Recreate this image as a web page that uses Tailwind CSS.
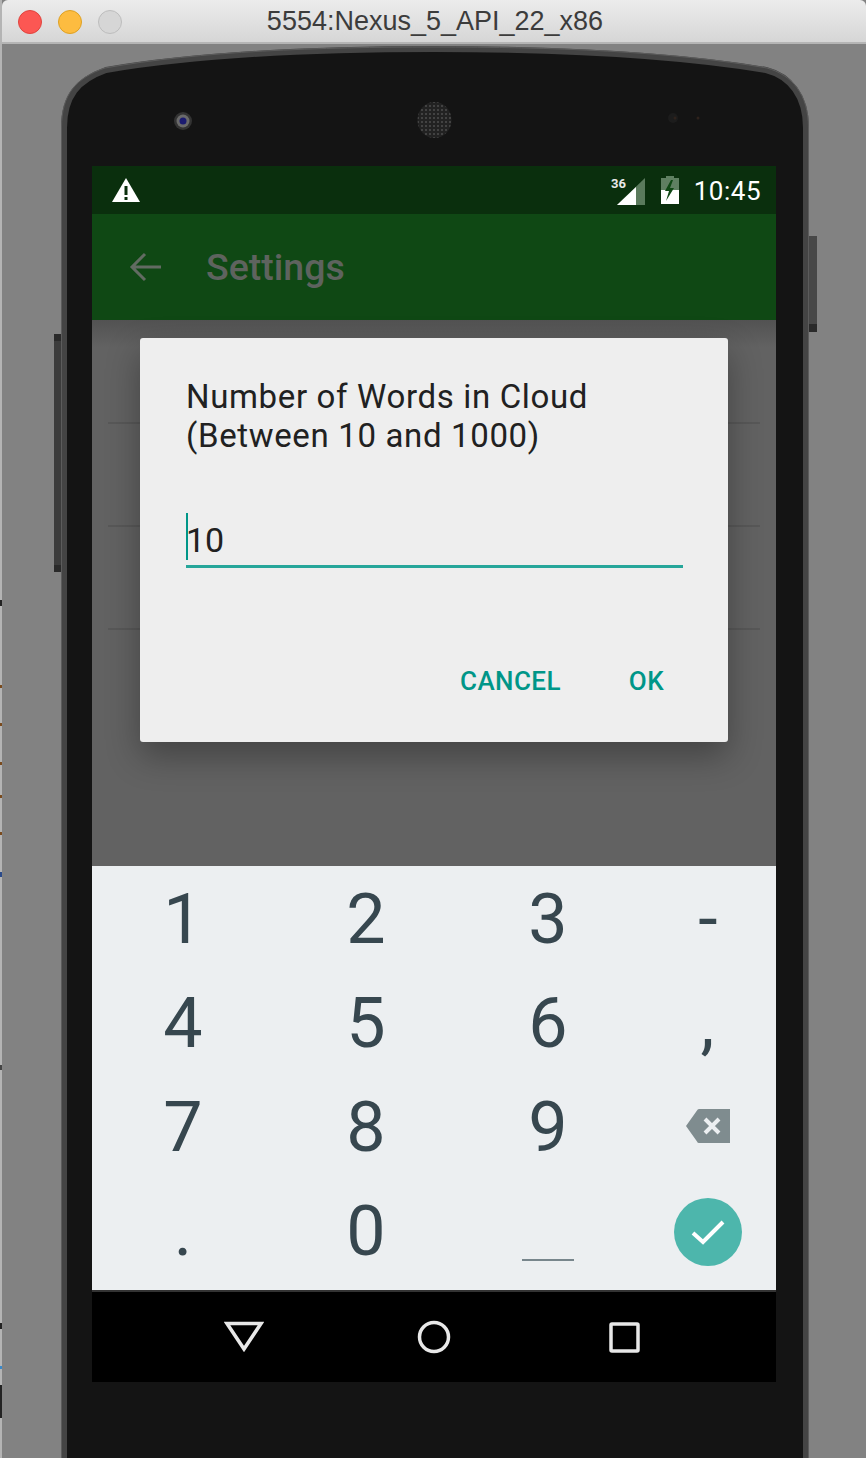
<!DOCTYPE html>
<html>
<head>
<meta charset="utf-8">
<script src="https://cdn.jsdelivr.net/npm/@tailwindcss/browser@4"></script>
</head>
<body class="m-0">
<div class="relative w-[866px] h-[1458px] overflow-hidden bg-[#828282] font-['Roboto',sans-serif]">
  <!-- device body -->
  <svg class="absolute left-0 top-0" width="866" height="1458" viewBox="0 0 866 1458" fill="none">
    <defs>
      <pattern id="mesh" width="4" height="4" patternUnits="userSpaceOnUse"><rect width="4" height="4" fill="#222222"/><circle cx="2" cy="2" r="1" fill="#4c4c4c"/></pattern>
    </defs>
    <rect x="54" y="334" width="8" height="238" fill="#3c3c3c"/>
    <rect x="54" y="334" width="8" height="7" fill="#2a2a2a"/>
    <rect x="54" y="565" width="8" height="7" fill="#2a2a2a"/>
    <rect x="809" y="236" width="8" height="96" fill="#484848"/>
    <rect x="809" y="324" width="8" height="8" fill="#2a2a2a"/>
    <path d="M64 1480V128C64 96 78 80 106 70C200 54 320 49 434 49C550 49 670 54 766 70C790 76 806 96 806 128V1480Z" fill="#141414" stroke="#444444" stroke-width="6"/>
    <path d="M61.500 1458V128C61.500 94 76 78 105 68C200 51 320 47 434 47C550 47 670 51 767 68C792 75 808.500 94 808.500 128V1458" stroke="#5c5c5c" stroke-width="1"/>
    <circle cx="183" cy="121" r="9" fill="#333333"/>
    <circle cx="183" cy="121" r="6.500" fill="#6a6a6a"/>
    <circle cx="183" cy="121" r="3.500" fill="#1b1b70"/>
    <ellipse cx="434.500" cy="120" rx="17" ry="18" fill="url(#mesh)"/>
    <circle cx="673" cy="118" r="5" fill="#1c1c1c"/>
    <circle cx="675" cy="118" r="1.500" fill="#2e221c"/>
    <circle cx="698" cy="118" r="1.500" fill="#2e221c"/>
  </svg>

  <!-- left edge sliver of the desktop behind the window -->
  <div class="absolute left-0 top-0 flex h-[1458px] w-[2px] flex-col bg-[#b4b4b4]">
    <div class="mt-[600px] h-[6px] bg-[#222222]"></div>
    <div class="mt-[79px] h-[3px] bg-[#7a4a1c]"></div>
    <div class="mt-[35px] h-[3px] bg-[#7a4a1c]"></div>
    <div class="mt-[36px] h-[3px] bg-[#7a4a1c]"></div>
    <div class="mt-[30px] h-[3px] bg-[#7a4a1c]"></div>
    <div class="mt-[34px] h-[3px] bg-[#7a4a1c]"></div>
    <div class="mt-[37px] h-[5px] bg-[#2a4a8a]"></div>
    <div class="mt-[188px] h-[5px] bg-[#444444]"></div>
    <div class="mt-[253px] h-[6px] bg-[#222222]"></div>
    <div class="mt-[37px] h-[3px] bg-[#3a88c8]"></div>
    <div class="mt-[16px] h-[33px] bg-[#232323]"></div>
  </div>

  <!-- title bar -->
  <div class="relative ml-[2px] flex h-[44px] items-center justify-center rounded-t-[6px] border-b-[2px] border-[#b5b5b5] bg-gradient-to-b from-[#ececec] to-[#d6d6d6]">
    <div class="absolute left-[16px] top-[10px] flex gap-[16px]">
      <span class="h-[24px] w-[24px] rounded-full border border-[#e0443e] bg-[#fc5753]"></span>
      <span class="h-[24px] w-[24px] rounded-full border border-[#dea123] bg-[#fdbc40]"></span>
      <span class="h-[24px] w-[24px] rounded-full border border-[#bdbdbd] bg-[#d6d6d6]"></span>
    </div>
    <span class="pl-[2px] pt-[1px] text-[27px] leading-none text-[#3c3c3c] font-['Liberation_Sans',sans-serif]">5554:Nexus_5_API_22_x86</span>
  </div>

  <!-- screen -->
  <div class="relative ml-[92px] mt-[122px] flex h-[1216px] w-[684px] flex-col">
    <!-- status bar -->
    <div class="flex h-[48px] items-center justify-between bg-[#0a2f0d] pl-[20px] pr-[15px]">
      <svg width="28" height="26" viewBox="0 0 28 26"><path d="M14 1 28 25H0Z" fill="#fff"/><rect x="12.500" y="9" width="3" height="9" fill="#0a2f0d"/><rect x="12.500" y="20" width="3" height="3" fill="#0a2f0d"/></svg>
      <div class="flex items-center">
        <svg width="36" height="30" viewBox="0 0 36 30" class="mt-[1px]">
          <path d="M35 2V29H7Z" fill="#5a7a5c"/><path d="M26 11V29H7Z" fill="#fff"/>
          <text x="1" y="12" font-size="13" font-weight="700" fill="#e8e8e8" font-family="Roboto">36</text>
        </svg>
        <svg width="18" height="28" viewBox="0 0 18 28" class="ml-[15px]">
          <path d="M5 0H13V2H18V28H0V2H5Z" fill="#5f7f61"/>
          <path d="M0 14H18V28H0Z" fill="#fff"/>
          <path d="M10 4 4 15H8L5 25 13 12H9L12 4Z" fill="#0f4814"/>
        </svg>
        <span class="ml-[15px] pt-[2px] text-[26px] leading-none tracking-[0.5px] text-white">10:45</span>
      </div>
    </div>
    <!-- app bar -->
    <div class="flex h-[106px] items-center bg-[#0f4814] pl-[36px]">
      <svg width="34" height="34" viewBox="0 0 34 34" fill="none" stroke="#626b62" stroke-width="3"><path d="M33 17H4M17 4 4 17 17 30"/></svg>
      <span class="ml-[44px] pt-[2px] text-[37.500px] leading-none font-medium text-[#5e635e]">Settings</span>
    </div>
    <!-- dim settings + dialog -->
    <div class="relative h-[546px] bg-gradient-to-b from-[#525252] via-[#626262] via-[5%] to-[#626262] pt-[18px]">
      <div class="absolute left-[16px] right-[16px] top-[102px] h-[2px] bg-[#585858]"></div>
      <div class="absolute left-[16px] right-[16px] top-[205px] h-[2px] bg-[#585858]"></div>
      <div class="absolute left-[16px] right-[16px] top-[308px] h-[2px] bg-[#585858]"></div>
      <div class="relative mx-[48px] flex h-[404px] w-[588px] flex-col rounded-[3px] bg-[#eeeeee] shadow-[0_14px_34px_rgba(0,0,0,0.32)]">
        <div class="pl-[46px] pt-[39px] text-[33px] leading-[39px] font-normal tracking-[0.65px] text-[#212121]">
          <div>Number of Words in Cloud</div>
          <div>(Between 10 and 1000)</div>
        </div>
        <div class="relative mx-[46px] mt-[58px] h-[55px] w-[497px] border-b-[3px] border-[#26a69a] pt-[2px] text-[34px] leading-[50px] text-[#212121]">
          <span class="absolute left-0 top-0 h-[47px] w-[2px] bg-[#009688]"></span>10
        </div>
        <div class="mt-[94px] flex items-center justify-end pr-[64px] text-[26px] font-medium tracking-[0.4px] text-[#009688]">
          <span>CANCEL</span><span class="ml-[68px]">OK</span>
        </div>
      </div>
    </div>
    <!-- keyboard -->
    <div class="grid h-[424px] grid-cols-[182px_182px_182px_138px] grid-rows-[104px_104px_104px_104px] bg-[#eceff1] pb-[8px] text-[70px] leading-none font-normal text-[#37474f]">
      <div class="flex items-center justify-center pt-[2px]">1</div>
      <div class="flex items-center justify-center pt-[2px] pl-[2px]">2</div>
      <div class="flex items-center justify-center pt-[2px] pl-[2px]">3</div>
      <div class="flex items-center justify-center pt-[2px] pl-[2px]">-</div>
      <div class="flex items-center justify-center pt-[2px]">4</div>
      <div class="flex items-center justify-center pt-[2px] pl-[2px]">5</div>
      <div class="flex items-center justify-center pt-[2px] pl-[2px]">6</div>
      <div class="flex items-center justify-center pt-[2px] pl-[1px]">,</div>
      <div class="flex items-center justify-center pt-[2px]">7</div>
      <div class="flex items-center justify-center pt-[2px] pl-[2px]">8</div>
      <div class="flex items-center justify-center pt-[2px] pl-[2px]">9</div>
      <div class="flex items-center justify-center pl-[2px]">
        <svg width="46" height="36" viewBox="0 0 46 36"><path d="M12 2.500Q12.500 1 14 1H45V35H14Q12.500 35 12 33.500L1 18Z" fill="#7f8c8f"/><path d="M20 11 34 25M34 11 20 25" stroke="#eceff1" stroke-width="4"/></svg>
      </div>
      <div class="flex items-center justify-center pt-[2px]">.</div>
      <div class="flex items-center justify-center pt-[2px] pl-[2px]">0</div>
      <div class="flex items-center justify-center pl-[2px] pt-[60px]"><span class="h-[2px] w-[52px] bg-[#78868c]"></span></div>
      <div class="flex items-center justify-center pl-[2px] pt-[3px]">
        <span class="flex h-[68px] w-[68px] items-center justify-center rounded-full bg-[#4db6ac]">
          <svg width="34" height="26" viewBox="0 0 34 26" fill="none" stroke="#fff" stroke-width="4"><path d="M2 14 12 23 32 3"/></svg>
        </span>
      </div>
    </div>
    <!-- nav bar -->
    <div class="flex h-[92px] items-center border-t-[2px] border-[#333333] bg-black">
      <div class="flex w-full items-center pl-[132px]">
        <svg width="40" height="32" viewBox="0 0 40 32" fill="none" stroke="#e8e8e8" stroke-width="3.500"><path d="M3 2.500H37L20 28Z"/></svg>
        <svg width="34" height="34" viewBox="0 0 34 34" fill="none" stroke="#e8e8e8" stroke-width="3.500" class="ml-[153px]"><circle cx="17" cy="17" r="14.500"/></svg>
        <svg width="31" height="31" viewBox="0 0 31 31" fill="none" stroke="#e8e8e8" stroke-width="3.500" class="ml-[158px]"><rect x="2" y="2" width="27" height="27" rx="1"/></svg>
      </div>
    </div>
  </div>
</div>
</body>
</html>
